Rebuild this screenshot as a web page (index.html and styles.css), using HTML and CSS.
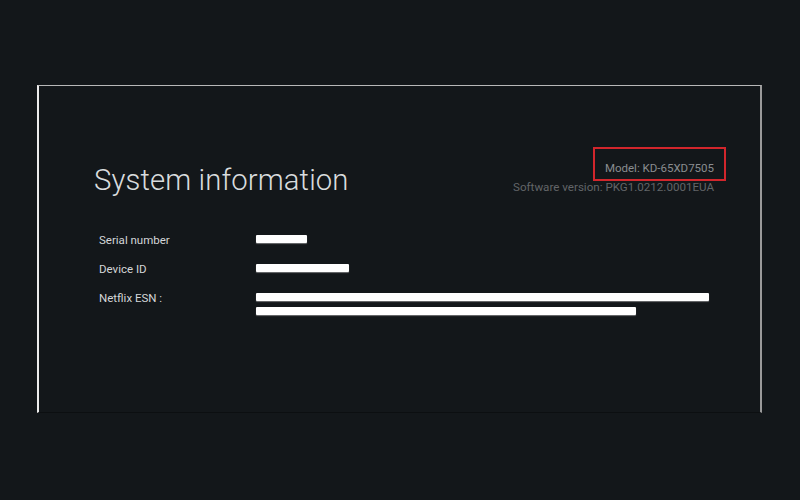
FILE: index.html
```html
<!DOCTYPE html>
<html>
<head>
<meta charset="utf-8">
<link rel="stylesheet" href="styles.css">
</head>
<body>
<div class="frame">
  <div class="header">
    <h1 class="title">System information</h1>
    <div class="meta">
      <div class="model-box"><span class="model">Model: KD-65XD7505</span></div>
      <div class="software">Software version: PKG1.0212.0001EUA</div>
    </div>
  </div>
  <div class="rows">
    <div class="label">Serial number</div>
    <div class="value"><span class="redact" style="width:51px"></span></div>
    <div class="label">Device ID</div>
    <div class="value"><span class="redact" style="width:93px"></span></div>
    <div class="label">Netflix ESN :</div>
    <div class="value esn">
      <span class="redact" style="width:453px"></span>
      <span class="redact" style="width:380px"></span>
    </div>
  </div>
</div>
</body>
</html>
```
FILE: styles.css
```css
html, body {
  margin: 0;
  padding: 0;
  background: #13171a;
  height: 100%;
}
body {
  font-family: Roboto, "Liberation Sans", sans-serif;
  padding-top: 85px;
  box-sizing: border-box;
}
.frame {
  margin-left: 37px;
  width: 725px;
  height: 328px;
  box-sizing: border-box;
  border-left: 2px solid #ececec;
  border-top: 1px solid #b8b8b8;
  border-right: 2px solid #9a9a9a;
  border-bottom: 1px solid #0c0f11;
  background: #13171a;
}
.header {
  display: flex;
  justify-content: space-between;
  align-items: flex-start;
  padding-left: 55px;
  padding-right: 46px;
  padding-top: 61px;
}
.title {
  margin: 0;
  margin-top: 15px;
  font-size: 29.3px;
  font-weight: 300;
  color: #d9dcde;
  letter-spacing: 0.1px;
  line-height: 36px;
}
.meta {
  display: flex;
  flex-direction: column;
  align-items: flex-end;
}
.model-box {
  border: 2px solid #d2262c;
  width: 133px;
  height: 34px;
  box-sizing: border-box;
  display: flex;
  align-items: center;
  justify-content: flex-end;
  padding-right: 10px;
  padding-top: 8px;
  margin-right: -12px;
}
.model {
  font-size: 11.5px;
  color: #8a8d90;
  line-height: 14px;
}
.software {
  font-size: 11.6px;
  color: #626568;
  line-height: 14px;
  margin-top: -1px;
}
.rows {
  display: grid;
  grid-template-columns: 157px 1fr;
  row-gap: 15px;
  padding-left: 60px;
  padding-top: 35px;
}
.label {
  font-size: 11.5px;
  color: #d4d6d8;
  line-height: 14px;
}
.value {
  display: flex;
  flex-direction: column;
  gap: 6px;
  padding-top: 2px;
}
.redact {
  display: block;
  height: 8px;
  background: #ffffff;
  border-radius: 1px;
  box-shadow: 0 1px 1px rgba(200,200,200,0.5);
}
```
